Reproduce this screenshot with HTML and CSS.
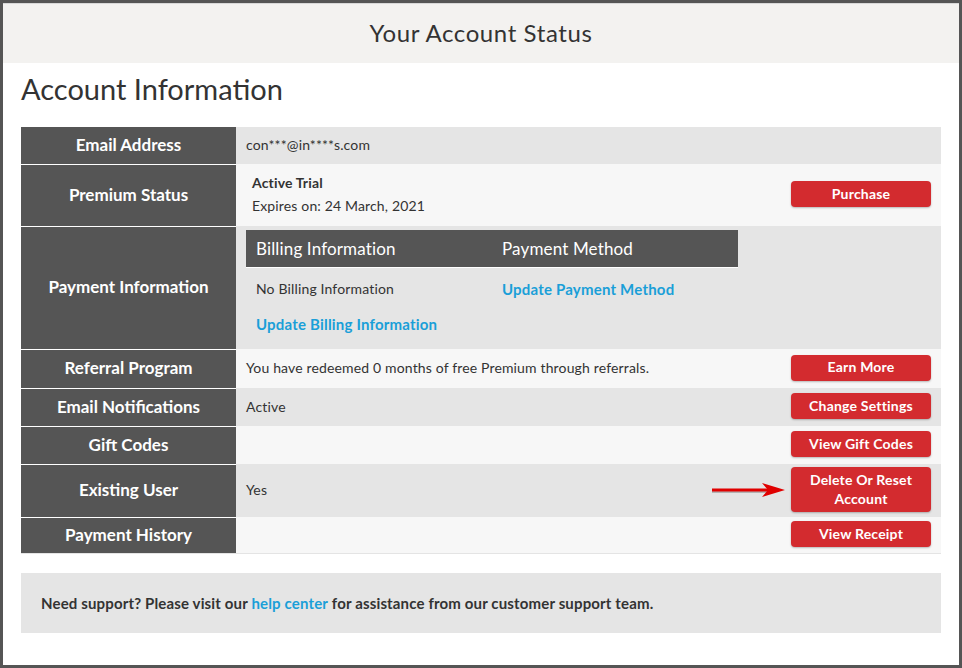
FILE: index.html
```html
<!DOCTYPE html>
<html>
<head>
<meta charset="utf-8">
<link rel="stylesheet" href="styles.css">
</head>
<body>
<div class="frame">
  <header class="top">Your Account Status</header>
  <main class="content">
    <h1 class="title">Account Information</h1>
    <div class="info">
      <div class="row r-email">
        <div class="label">Email Address</div>
        <div class="value"><span>con***@in****s.com</span></div>
      </div>
      <div class="row r-premium alt">
        <div class="label">Premium Status</div>
        <div class="value">
          <div class="premium">
            <div class="strong">Active Trial</div>
            <div>Expires on: 24 March, 2021</div>
          </div>
          <a class="btn">Purchase</a>
        </div>
      </div>
      <div class="row r-payment">
        <div class="label">Payment Information</div>
        <div class="value top-align">
          <div class="inner">
            <div class="inner-head">
              <div class="col">Billing Information</div>
              <div class="col">Payment Method</div>
            </div>
            <div class="inner-row first">
              <div class="col">No Billing Information</div>
              <div class="col"><a class="link">Update Payment Method</a></div>
            </div>
            <div class="inner-row second">
              <div class="col"><a class="link">Update Billing Information</a></div>
              <div class="col"></div>
            </div>
          </div>
        </div>
      </div>
      <div class="row r-referral alt">
        <div class="label">Referral Program</div>
        <div class="value"><span>You have redeemed 0 months of free Premium through referrals.</span><a class="btn">Earn More</a></div>
      </div>
      <div class="row r-notif">
        <div class="label">Email Notifications</div>
        <div class="value"><span>Active</span><a class="btn">Change Settings</a></div>
      </div>
      <div class="row r-gift alt">
        <div class="label">Gift Codes</div>
        <div class="value"><span></span><a class="btn">View Gift Codes</a></div>
      </div>
      <div class="row r-existing">
        <div class="label">Existing User</div>
        <div class="value"><span>Yes</span>
          <div class="btn-wrap">
            <svg class="arrow" width="76" height="16" viewBox="0 0 76 16"><line x1="0" y1="8.5" x2="58" y2="8.5" stroke="#555" stroke-opacity="0.35" stroke-width="3"/><line x1="0" y1="7" x2="58" y2="7" stroke="#e00000" stroke-width="3"/><polygon points="50,0 73,7 50,14 56,7" fill="#e00000"/></svg>
            <a class="btn tall">Delete Or Reset<br>Account</a>
          </div>
        </div>
      </div>
      <div class="row r-history alt last">
        <div class="label">Payment History</div>
        <div class="value"><span></span><a class="btn">View Receipt</a></div>
      </div>
    </div>
    <div class="support">Need support? Please visit our <a class="link">help center</a> for assistance from our customer support team.</div>
  </main>
</div>
</body>
</html>
```

FILE: styles.css
```css
* { box-sizing: border-box; }
html, body { margin: 0; padding: 0; background: #fff; }
body { font-family: Lato, "Open Sans", sans-serif; color: #333; }
.frame {
  width: 962px;
  height: 668px;
  border: 3px solid #555;
  overflow: hidden;
}
.top {
  background: #f3f2f0;
  border-top: 1px solid #d8d8d8;
  height: 60px;
  display: flex;
  align-items: center;
  justify-content: center;
  font-size: 24px;
  letter-spacing: 0.6px;
  color: #333;
  padding-bottom: 2px;
}
.content { padding: 0 18px; }
.title {
  margin: 0;
  font-weight: 400;
  font-size: 29px;
  line-height: 32px;
  padding-top: 10px;
  height: 64px;
  color: #333;
}
.info { display: flex; flex-direction: column; border-bottom: 1px solid #e4e4e4; }
.row { display: flex; background: #e5e5e5; }
.row.alt { background: #f7f7f7; }
.label {
  width: 215px;
  flex: none;
  background: #555;
  color: #fff;
  font-size: 17px;
  font-weight: 700;
  display: flex;
  align-items: center;
  justify-content: center;
  border-top: 1px solid #fff;
  padding-bottom: 3px;
}
.r-email .label { border-top: none; }
.value {
  flex: 1;
  display: flex;
  align-items: center;
  justify-content: space-between;
  padding: 0 10px;
  font-size: 14px;
  letter-spacing: 0.15px;
}
.value > span { padding-bottom: 2px; }
.value.top-align { align-items: flex-start; padding-top: 4px; }
.r-email { height: 37px; }
.r-premium { height: 62px; }
.r-payment { height: 123px; }
.r-referral { height: 39px; }
.r-notif { height: 38px; }
.r-gift { height: 38px; }
.r-existing { height: 53px; }
.r-history { height: 36px; }
.premium { padding-left: 6px; line-height: 23px; padding-bottom: 3px; }
.strong { font-weight: 700; }
.btn {
  display: flex;
  align-items: center;
  justify-content: center;
  width: 140px;
  height: 26px;
  background: #d32b2f;
  color: #fff;
  border-radius: 4px;
  font-size: 14px;
  letter-spacing: 0.2px;
  font-weight: 700;
  box-shadow: 0 1px 2px rgba(0,0,0,0.25);
  text-align: center;
  line-height: 19px;
  padding-bottom: 2px;
  margin-bottom: 2px;
}
.btn.tall { height: 45px; }
.btn-wrap { display: flex; align-items: center; gap: 3px; }
.arrow { display: block; margin-top: 1px; }
.inner { width: 492px; }
.inner-head {
  display: flex;
  background: #555;
  color: #fff;
  height: 38px;
  align-items: center;
  font-size: 17px;
  border-bottom: 1px solid #fff;
  padding-bottom: 1px;
}
.inner .col { width: 246px; padding-left: 10px; }
.inner-row { display: flex; align-items: center; }
.inner-row.first { height: 41px; }
.inner-row.second { height: 30px; }
.link { color: #1a9fd8; font-weight: 700; }
.inner-row .link { font-size: 15px; letter-spacing: 0.2px; }
.support {
  margin-top: 19px;
  background: #e5e5e5;
  height: 60px;
  display: flex;
  align-items: center;
  padding: 0 20px 0;
  font-size: 15px;
  letter-spacing: 0.15px;
  font-weight: 700;
  white-space: pre;
}
.support .link { font-weight: 700; }
```
